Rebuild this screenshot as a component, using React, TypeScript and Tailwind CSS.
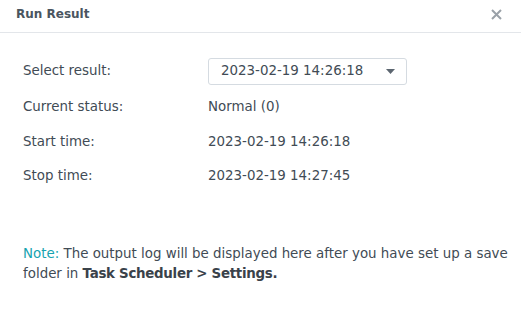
const rows = [
  { label: "Current status:", value: "Normal (0)" },
  { label: "Start time:", value: "2023-02-19 14:26:18" },
  { label: "Stop time:", value: "2023-02-19 14:27:45" },
];

export default function App() {
  return (
    <div
      className="w-[521px] h-[309px] bg-white text-[#414b55] text-[13.4px]"
      style={{ fontFamily: '"DejaVu Sans", Verdana, sans-serif' }}
    >
      <div className="h-[33px] border-b border-[#e3e6ea] flex items-center justify-between pl-[16px] pr-[19px] pb-[4px]">
        <h2 className="font-bold text-[12px] text-[#4a5560]">Run Result</h2>
        <svg width="11" height="11" viewBox="0 0 11 11" className="text-[#9aa1a8]">
          <path d="M1 1 L10 10 M10 1 L1 10" stroke="currentColor" strokeWidth="2" />
        </svg>
      </div>

      <div className="pl-[23px] pt-[25px]">
        <div className="flex items-center h-[27px]">
          <span className="w-[185px]">Select result:</span>
          <div className="w-[199px] h-[27px] border border-[#d5dbe1] rounded-[3px] flex items-center justify-between pl-[12px] pr-[11px]">
            <span>2023-02-19 14:26:18</span>
            <svg width="9" height="5" viewBox="0 0 9 5">
              <path d="M0 0 H9 L4.5 5 Z" fill="#5c6670" />
            </svg>
          </div>
        </div>
        <div className="mt-[5px]">
          {rows.map((r) => (
            <div key={r.label} className="flex items-center h-[34.5px]">
              <span className="w-[185px]">{r.label}</span>
              <span>{r.value}</span>
            </div>
          ))}
        </div>

        <p className="mt-[50px] leading-[20px] pr-[8px]">
          <span className="text-[#16a3b0]">Note:</span> The output log will be displayed here after you
          have set up a save folder in{" "}
          <b className="text-[#3a424a] tracking-[-0.3px]">Task Scheduler &gt; Settings.</b>
        </p>
      </div>
    </div>
  );
}
